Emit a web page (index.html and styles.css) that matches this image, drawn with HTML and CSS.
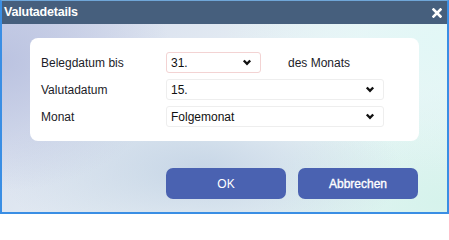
FILE: index.html
```html
<!DOCTYPE html>
<html lang="de">
<head>
<meta charset="utf-8">
<title>Valutadetails</title>
<link rel="stylesheet" href="styles.css">
</head>
<body>
<div class="window">
  <div class="titlebar">
    <span class="title">Valutadetails</span>
    <svg class="close" width="10" height="10" viewBox="0 0 10 10"><path d="M1.5 1.5 L8.5 8.5 M8.5 1.5 L1.5 8.5" stroke="#fff" stroke-width="2.6" stroke-linecap="square"/></svg>
  </div>
  <div class="content">
    <div class="card">
      <div class="label">Belegdatum bis</div>
      <div class="field">
        <div class="sel sel-short sel-warn">
          <span>31.</span>
          <svg class="chev" width="10" height="7" viewBox="0 0 10 7"><path d="M1.8 1.5 L5 4.8 L8.2 1.5" fill="none" stroke="#111" stroke-width="2.4"/></svg>
        </div>
        <span class="suffix">des Monats</span>
      </div>
      <div class="label">Valutadatum</div>
      <div class="field">
        <div class="sel">
          <span>15.</span>
          <svg class="chev" width="10" height="7" viewBox="0 0 10 7"><path d="M1.8 1.5 L5 4.8 L8.2 1.5" fill="none" stroke="#111" stroke-width="2.4"/></svg>
        </div>
      </div>
      <div class="label">Monat</div>
      <div class="field">
        <div class="sel">
          <span>Folgemonat</span>
          <svg class="chev" width="10" height="7" viewBox="0 0 10 7"><path d="M1.8 1.5 L5 4.8 L8.2 1.5" fill="none" stroke="#111" stroke-width="2.4"/></svg>
        </div>
      </div>
    </div>
    <div class="buttons">
      <button class="btn">OK</button>
      <button class="btn btn-medium">Abbrechen</button>
    </div>
  </div>
</div>
</body>
</html>
```
FILE: styles.css
```css
* { box-sizing: border-box; }
html, body { margin: 0; padding: 0; }
body {
  width: 449px;
  height: 214px;
  overflow: hidden;
  font-family: "Liberation Sans", Arial, sans-serif;
  background: #fff;
}
.window {
  width: 449px;
  height: 214px;
  border: 2px solid #3a8ee4;
  border-top: 1px solid #6fa6d8;
  display: flex;
  flex-direction: column;
  background:
    radial-gradient(ellipse 170px 130px at 0px 60px, rgba(186,194,224,0.95), rgba(186,194,224,0) 100%),
    radial-gradient(ellipse 200px 90px at 200px 170px, rgba(194,210,228,0.9), rgba(194,210,228,0) 100%),
    radial-gradient(ellipse 220px 130px at 440px 40px, rgba(226,247,246,1), rgba(226,247,246,0) 100%),
    radial-gradient(ellipse 180px 110px at 440px 200px, rgba(214,243,236,1), rgba(214,243,236,0) 100%),
    linear-gradient(135deg, #d0d6ea 0%, #e4ecf3 45%, #eef5f8 60%, #e2f4f2 100%);
}
.titlebar {
  height: 23px;
  background: #465f7d;
  display: flex;
  align-items: center;
  justify-content: space-between;
  padding: 0 5px 1px 2px;
  flex: none;
}
.title {
  color: #fff;
  font-weight: bold;
  font-size: 12.5px;
  letter-spacing: -0.2px;
}
.close { display: block; margin-top: 2px; }
.content {
  flex: 1;
  display: flex;
  flex-direction: column;
  padding: 14px 0 0 28px;
}
.card {
  width: 389px;
  background: #fff;
  border-radius: 8px;
  padding: 14px 35px 14px 11px;
  display: grid;
  grid-template-columns: 125px 1fr;
  row-gap: 6px;
  align-items: center;
}
.label {
  font-size: 12px;
  color: #1c1c28;
}
.field {
  display: flex;
  align-items: center;
}
.sel {
  width: 218px;
  height: 21px;
  border: 1px solid #eeeeee;
  border-radius: 3px;
  display: flex;
  align-items: center;
  justify-content: space-between;
  padding: 0 8px 0 4px;
  font-size: 12px;
  color: #111;
  background: #fff;
}
.sel-short { width: 95px; }
.sel-warn { border-color: #f3d3d3; }
.chev { display: block; }
.suffix {
  margin-left: 27px;
  font-size: 12px;
  color: #1c1c28;
}
.buttons {
  display: flex;
  justify-content: flex-end;
  gap: 12px;
  padding-right: 29px;
  margin-top: 27px;
}
.btn {
  width: 120px;
  height: 31px;
  border: none;
  border-radius: 7px;
  background: #4a62b1;
  color: #fff;
  font-family: "Liberation Sans", Arial, sans-serif;
  font-size: 12px;
  padding: 0;
}
.btn-medium { -webkit-text-stroke: 0.35px #fff; }
```
